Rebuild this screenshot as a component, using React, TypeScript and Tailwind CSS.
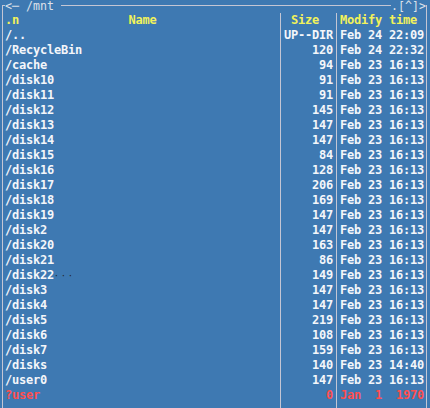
import React from "react";

type Entry = {
  name: string;
  size: string;
  time: string;
  broken?: boolean;
};

const entries: Entry[] = [
  { name: "/..", size: "UP--DIR", time: "Feb 24 22:09" },
  { name: "/RecycleBin", size: "120", time: "Feb 24 22:32" },
  { name: "/cache", size: "94", time: "Feb 23 16:13" },
  { name: "/disk10", size: "91", time: "Feb 23 16:13" },
  { name: "/disk11", size: "91", time: "Feb 23 16:13" },
  { name: "/disk12", size: "145", time: "Feb 23 16:13" },
  { name: "/disk13", size: "147", time: "Feb 23 16:13" },
  { name: "/disk14", size: "147", time: "Feb 23 16:13" },
  { name: "/disk15", size: "84", time: "Feb 23 16:13" },
  { name: "/disk16", size: "128", time: "Feb 23 16:13" },
  { name: "/disk17", size: "206", time: "Feb 23 16:13" },
  { name: "/disk18", size: "169", time: "Feb 23 16:13" },
  { name: "/disk19", size: "147", time: "Feb 23 16:13" },
  { name: "/disk2", size: "147", time: "Feb 23 16:13" },
  { name: "/disk20", size: "163", time: "Feb 23 16:13" },
  { name: "/disk21", size: "86", time: "Feb 23 16:13" },
  { name: "/disk22", size: "149", time: "Feb 23 16:13" },
  { name: "/disk3", size: "147", time: "Feb 23 16:13" },
  { name: "/disk4", size: "147", time: "Feb 23 16:13" },
  { name: "/disk5", size: "219", time: "Feb 23 16:13" },
  { name: "/disk6", size: "108", time: "Feb 23 16:13" },
  { name: "/disk7", size: "159", time: "Feb 23 16:13" },
  { name: "/disks", size: "140", time: "Feb 23 14:40" },
  { name: "/user0", size: "147", time: "Feb 23 16:13" },
  { name: "?user", size: "0", time: "Jan  1  1970", broken: true },
];

// column cells, shared by every row so the separators line up
const nameCell = "w-[278px] shrink-0 border-l border-[#c4c6d4] pl-[2px] overflow-hidden";
const sizeCell = "w-[56px] shrink-0 border-l border-[#c4c6d4] px-[3px] overflow-hidden";
const timeCell = "w-[91px] shrink-0 border-x border-[#c4c6d4] pl-[3px] overflow-hidden";

function Row({ entry }: { entry: Entry }) {
  const color = entry.broken ? "text-[#ff4f4f]" : "text-[#f4f6fa]";
  return (
    <div className={`flex h-[15px] leading-[15px] whitespace-pre font-bold ${color}`}>
      <div className="w-[2px] shrink-0" />
      <div className={nameCell}>
        {entry.name}
        {entry.name === "/disk22" && (
          <span className="text-[#222] font-normal text-[8px] tracking-[2.2px]">···</span>
        )}
      </div>
      <div className={`${sizeCell} text-right`}>{entry.size}</div>
      <div className={timeCell}>{entry.time}</div>
    </div>
  );
}

export default function App() {
  return (
    <div
      className="w-[430px] h-[408px] overflow-hidden bg-[#3e79b2] flex flex-col text-[12px] tracking-[-0.22px]"
      style={{ fontFamily: '"DejaVu Sans Mono", "Liberation Mono", monospace' }}
    >
      {/* Panel title */}
      <div className="h-[13px] shrink-0 flex items-start text-[#dde1ea] text-[11.6px] tracking-normal whitespace-pre">
        <div className="w-[2px] shrink-0" />
        <div className="h-full w-[3px] shrink-0 flex flex-col">
          <div className="h-[5px]" />
          <div className="flex-1 border-l border-t border-[#c4c6d4]" />
        </div>
        <div className="leading-[13px]">{"<─ /mnt "}</div>
        <div className="h-full flex-1 flex flex-col">
          <div className="h-[5px]" />
          <div className="h-[1px] bg-[#c4c6d4]" />
        </div>
        <div className="leading-[13px]">.[^]&gt;</div>
        <div className="h-full w-[3px] shrink-0 flex flex-col">
          <div className="h-[5px]" />
          <div className="flex-1 border-l border-[#c4c6d4]" />
        </div>
        <div className="w-[1px] shrink-0" />
      </div>

      {/* Column header */}
      <div className="flex h-[15px] leading-[15px] whitespace-pre font-bold text-[#f2f25a]">
        <div className="w-[2px] shrink-0" />
        <div className={`${nameCell} grid`}>
          <span className="col-start-1 row-start-1 justify-self-start">.n</span>
          <span className="col-start-1 row-start-1 justify-self-center">Name</span>
        </div>
        <div className={`${sizeCell} pl-[10px]`}>Size</div>
        <div className={timeCell}>Modify time</div>
      </div>

      {entries.map((e) => (
        <Row key={e.name} entry={e} />
      ))}

      {/* Empty space below the listing */}
      <div className="flex flex-1">
        <div className="w-[2px] shrink-0" />
        <div className={nameCell} />
        <div className={sizeCell} />
        <div className={timeCell} />
      </div>
    </div>
  );
}
